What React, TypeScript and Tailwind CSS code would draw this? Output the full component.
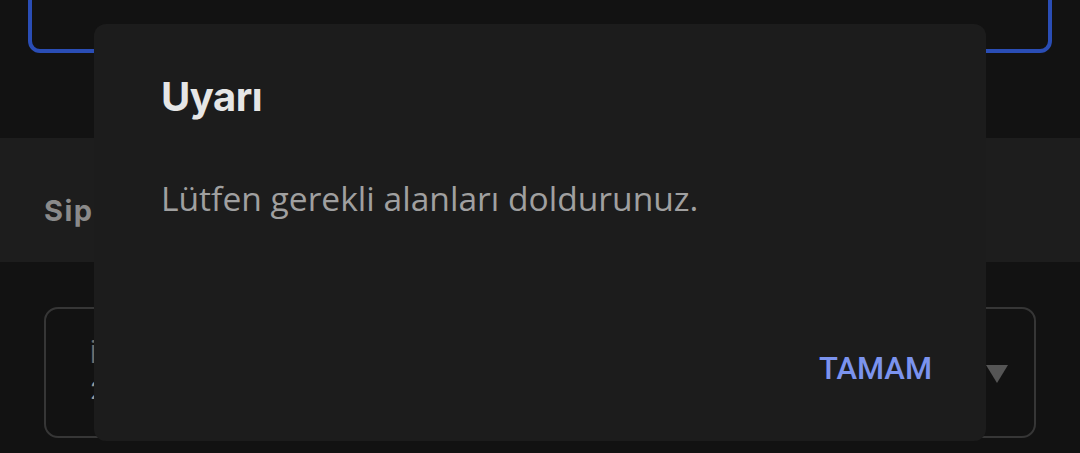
export default function App() {
  return (
    <div className="relative w-[1080px] h-[453px] overflow-hidden bg-[#121212] font-['Inter',sans-serif]">
      {/* page behind the scrim */}
      <div className="px-[28px]">
        <div className="relative -mt-[40px] h-[93px] rounded-b-[12px] border-[4px] border-[#2a4db5]">
          <div className="absolute right-[48px] -top-[0px] w-[34px] h-[34px] rounded-full border-[3px] border-[#5a5a5a] bg-[#2a2a2a]" />
        </div>
      </div>
      <div className="mt-[85px] h-[124px] bg-[#1d1d1d] px-[44px] pt-[56px]">
        <p className="text-[29px] leading-[34px] font-bold tracking-[1.5px] text-[#8a8a8a]">Siparişler</p>
      </div>
      <div className="mt-[45px] mx-[44px] h-[131px] rounded-[14px] border-2 border-[#363636] flex items-center pl-[44px] pr-[26px]">
        <div className="flex-1">
          <p className="text-[24px] leading-[28px] text-[#6f6f6f]">İl</p>
          <p className="mt-[8px] text-[24px] leading-[28px] text-[#9a9a9a]">2</p>
        </div>
        <svg width="22" height="18" viewBox="0 0 22 18" className="mt-[2px]">
          <path d="M0 0h22L11 18z" fill="#555555" />
        </svg>
      </div>

      {/* dialog */}
      <div className="absolute left-[94px] top-[24px] w-[892px] h-[417px] rounded-[12px] bg-[#1c1c1c] flex flex-col pl-[67px] pr-[54px] pt-[49px] pb-[54px]">
        <h2 className="text-[40px] leading-[48px] font-bold text-[#e6e6e6] tracking-[-0.5px]">Uyarı</h2>
        <p className="mt-[57px] text-[33.6px] leading-[40px] text-[#a0a0a0] font-['Open_Sans',sans-serif]">
          Lütfen gerekli alanları doldurunuz.
        </p>
        <div className="mt-auto flex justify-end">
          <button className="text-[31px] leading-[36px] font-medium text-[#7b93ee] font-['Roboto',sans-serif]">TAMAM</button>
        </div>
      </div>
    </div>
  );
}
